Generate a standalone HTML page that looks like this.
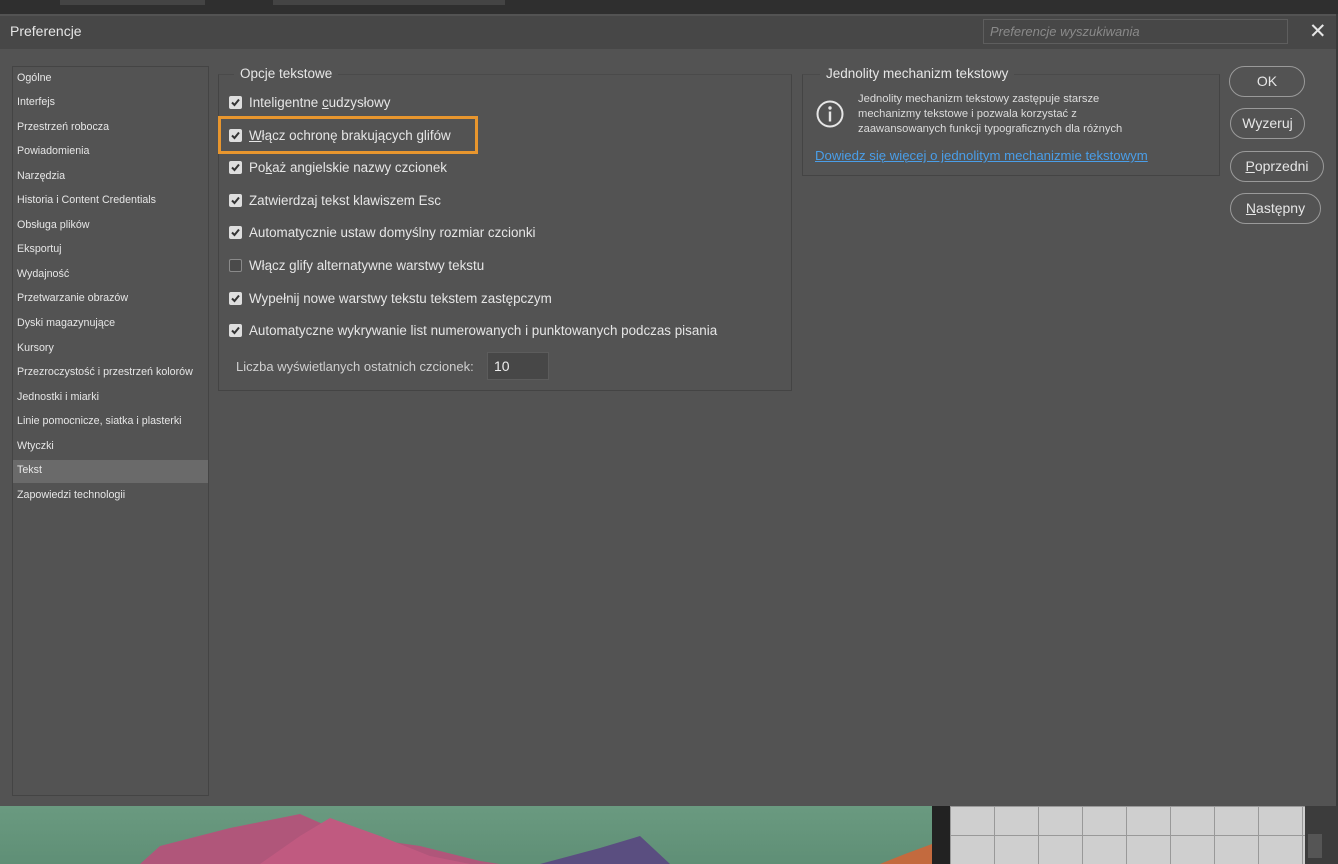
<!DOCTYPE html>
<html><head><meta charset="utf-8"><style>
*{margin:0;padding:0;box-sizing:border-box}
body{width:1338px;height:864px;overflow:hidden;background:#3a3a3a;font-family:"Liberation Sans","DejaVu Sans",sans-serif;position:relative;color:#dcdcdc}
.a{position:absolute}
.dlg{left:0;top:14px;width:1336px;height:792px;background:#535353}
.title{left:0;top:16px;width:1336px;height:33px;background:#474747}
.side{left:12px;top:66px;width:197px;height:730px;border:1px solid #444;background:#535353}
.side div{position:absolute;left:4px;font-size:10.7px;color:#e6e6e6;white-space:nowrap}
.grp{border:1px solid #444;border-top-color:#4a4a4a}
.leg{background:#535353;padding:0 6px;font-size:13.5px;color:#e6e6e6}
.cb{position:absolute;left:229px;width:13px;height:13px;background:#dedede;border-radius:2px}
.cb svg{position:absolute;left:1px;top:1px}
.lbl{position:absolute;left:249px;font-size:13.4px;color:#e6e6e6;white-space:nowrap}
.btn{position:absolute;border:1.5px solid #9a9a9a;border-radius:16px;font-size:14px;color:#e6e6e6;text-align:center;line-height:28px}
u{text-decoration:underline}
</style></head><body>
<div class="a" style="left:0;top:0;width:1338px;height:14px;background:#2f2f2f"></div>
<div class="a" style="left:60px;top:0;width:145px;height:5px;background:#444"></div>
<div class="a" style="left:273px;top:0;width:232px;height:5px;background:#444"></div>
<div class="a dlg"></div>
<div class="a title"></div>
<div class="a" style="left:10px;top:23px;font-size:14px;color:#e6e6e6">Preferencje</div>
<div class="a" style="left:983px;top:19px;width:305px;height:25px;border:1px solid #5e5e5e;background:#474747;font-size:13px;font-style:italic;color:#8a8a8a;padding:4px 6px">Preferencje wyszukiwania</div>
<div class="a" style="left:1309px;top:19px;font-size:21px;color:#e6e6e6">✕</div>

<div class="a side">
<div style="top:5px">Ogólne</div>
<div style="top:29px">Interfejs</div>
<div style="top:54px">Przestrzeń robocza</div>
<div style="top:78px">Powiadomienia</div>
<div style="top:103px">Narzędzia</div>
<div style="top:127px">Historia i Content Credentials</div>
<div style="top:152px">Obsługa plików</div>
<div style="top:176px">Eksportuj</div>
<div style="top:201px">Wydajność</div>
<div style="top:225px">Przetwarzanie obrazów</div>
<div style="top:250px">Dyski magazynujące</div>
<div style="top:275px">Kursory</div>
<div style="top:299px">Przezroczystość i przestrzeń kolorów</div>
<div style="top:324px">Jednostki i miarki</div>
<div style="top:348px">Linie pomocnicze, siatka i plasterki</div>
<div style="top:373px">Wtyczki</div>
<div style="left:0;top:393px;width:195px;height:23px;background:#6a6a6a"></div>
<div style="top:397px">Tekst</div>
<div style="top:422px">Zapowiedzi technologii</div>
</div>

<div class="a grp" style="left:218px;top:74px;width:574px;height:317px"></div>
<div class="a leg" style="left:234px;top:66px">Opcje tekstowe</div>
<div class="a" style="left:218px;top:116px;width:260px;height:38px;border:3px solid #e8962e"></div>

<div class="cb" style="top:96px"><svg width="11" height="11"><path d="M2 5.5L4.5 8L9 2.5" stroke="#333" stroke-width="2" fill="none"/></svg></div>
<div class="lbl" style="top:95px">Inteligentne <u>c</u>udzysłowy</div>
<div class="cb" style="top:129px"><svg width="11" height="11"><path d="M2 5.5L4.5 8L9 2.5" stroke="#333" stroke-width="2" fill="none"/></svg></div>
<div class="lbl" style="top:128px"><u>W</u>łącz ochronę brakujących glifów</div>
<div class="cb" style="top:161px"><svg width="11" height="11"><path d="M2 5.5L4.5 8L9 2.5" stroke="#333" stroke-width="2" fill="none"/></svg></div>
<div class="lbl" style="top:160px">Po<u>k</u>aż angielskie nazwy czcionek</div>
<div class="cb" style="top:194px"><svg width="11" height="11"><path d="M2 5.5L4.5 8L9 2.5" stroke="#333" stroke-width="2" fill="none"/></svg></div>
<div class="lbl" style="top:193px">Zatwierdzaj tekst klawiszem Esc</div>
<div class="cb" style="top:226px"><svg width="11" height="11"><path d="M2 5.5L4.5 8L9 2.5" stroke="#333" stroke-width="2" fill="none"/></svg></div>
<div class="lbl" style="top:225px">Automatycznie ustaw domyślny rozmiar czcionki</div>
<div class="cb" style="top:259px;background:#4a4a4a;border:1px solid #8a8a8a"></div>
<div class="lbl" style="top:258px">Włącz glify alternatywne warstwy tekstu</div>
<div class="cb" style="top:292px"><svg width="11" height="11"><path d="M2 5.5L4.5 8L9 2.5" stroke="#333" stroke-width="2" fill="none"/></svg></div>
<div class="lbl" style="top:291px">Wypełnij nowe warstwy tekstu tekstem zastępczym</div>
<div class="cb" style="top:324px"><svg width="11" height="11"><path d="M2 5.5L4.5 8L9 2.5" stroke="#333" stroke-width="2" fill="none"/></svg></div>
<div class="lbl" style="top:323px">Automatyczne wykrywanie list numerowanych i punktowanych podczas pisania</div>
<div class="lbl" style="left:236px;top:359px;color:#cfcfcf;font-size:13px">Liczba wyświetlanych ostatnich czcionek:</div>
<div class="a" style="left:487px;top:352px;width:62px;height:28px;background:#474747;border:1px solid #5c5c5c;font-size:14px;color:#eee;padding:5px 6px">10</div>

<div class="a grp" style="left:802px;top:74px;width:418px;height:102px"></div>
<div class="a leg" style="left:820px;top:66px">Jednolity mechanizm tekstowy</div>
<svg class="a" style="left:815px;top:99px" width="30" height="30"><circle cx="15" cy="15" r="12.5" stroke="#e6e6e6" stroke-width="2" fill="none"/><circle cx="15" cy="9" r="1.7" fill="#e6e6e6"/><rect x="13.8" y="12.5" width="2.4" height="10" fill="#e6e6e6"/></svg>
<div class="a" style="left:858px;top:92px;font-size:11.2px;line-height:15px;color:#dcdcdc">Jednolity mechanizm tekstowy zastępuje starsze<br>mechanizmy tekstowe i pozwala korzystać z<br>zaawansowanych funkcji typograficznych dla różnych</div>
<div class="a" style="left:815px;top:148px;font-size:13.2px;color:#4a9ee8;text-decoration:underline">Dowiedz się więcej o jednolitym mechanizmie tekstowym</div>

<div class="btn" style="left:1229px;top:66px;width:76px;height:31px">OK</div>
<div class="btn" style="left:1230px;top:108px;width:75px;height:31px">Wyzeruj</div>
<div class="btn" style="left:1230px;top:151px;width:94px;height:31px"><u>P</u>oprzedni</div>
<div class="btn" style="left:1230px;top:193px;width:91px;height:31px"><u>N</u>astępny</div>

<div class="a" style="left:1336px;top:14px;width:2px;height:792px;background:#3a3a3a"></div>
<div class="a" style="left:0;top:806px;width:932px;height:58px;background:linear-gradient(#6a9a80,#5f8f76)"></div>
<svg class="a" style="left:0;top:806px" width="932" height="58"><path d="M140 58L160 40 230 22 300 8 350 30 420 40 480 55 500 58Z" fill="#b0567a"/><path d="M260 58L300 30 330 12 380 30 430 50 470 58Z" fill="#c05a80"/><path d="M540 58L600 42 640 30 670 58Z" fill="#5a4e80"/><path d="M880 58L905 48 932 38 932 58Z" fill="#c36a3e"/></svg>
<div class="a" style="left:932px;top:806px;width:18px;height:58px;background:#222"></div>
<div class="a" style="left:950px;top:806px;width:355px;height:58px;background:#cfcfcf;background-image:linear-gradient(90deg,#999 1px,transparent 1px),linear-gradient(#999 1px,transparent 1px);background-size:44px 29px"></div>
<div class="a" style="left:1305px;top:806px;width:33px;height:58px;background:#3c3c3c"></div>
<div class="a" style="left:1308px;top:834px;width:14px;height:24px;background:#555"></div>
</body></html>
